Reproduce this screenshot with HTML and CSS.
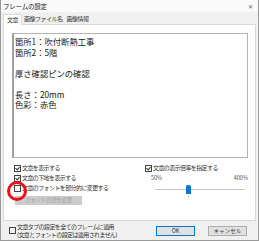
FILE: index.html
```html
<!DOCTYPE html>
<html lang="ja">
<head>
    <meta charset="UTF-8">
    <title>フレームの設定</title>
    <link rel="stylesheet" href="styles.css">
</head>
<body>
    <div class="window">
        <div class="titlebar">
            <span class="title">フレームの設定</span>
            <span class="close">✕</span>
        </div>
        <div class="content">
            <div class="tabs">
                <div class="tab active">文章</div>
                <div class="tab">画像ファイル名</div>
                <div class="tab">画像情報</div>
            </div>
            <div class="panel">
                <div class="textbox">
                    <p>箇所1：吹付断熱工事</p>
                    <p>箇所2：5階</p>
                    <p>&nbsp;</p>
                    <p>厚さ確認ピンの確認</p>
                    <p>&nbsp;</p>
                    <p>長さ：20mm</p>
                    <p>色彩：赤色</p>
                </div>
                <div class="options">
                    <div class="col-left">
                        <label class="check"><span class="box checked"></span>文章を表示する</label>
                        <label class="check"><span class="box checked"></span>文章の下地を表示する</label>
                        <label class="check"><span class="box"></span>文章のフォントを部分的に変更する</label>
                        <button class="btn-disabled" disabled>フォントの部分変更</button>
                    </div>
                    <div class="col-right">
                        <label class="check"><span class="box checked"></span>文章の表示倍率を指定する</label>
                        <div class="scale"><span>50%</span><span>400%</span></div>
                        <div class="slider">
                            <div class="track"></div>
                            <div class="thumb"></div>
                        </div>
                    </div>
                </div>
                <span class="marker"></span>
            </div>
            <div class="footer">
                <label class="apply-all">
                    <span class="box"></span>
                    <span class="apply-text">文章タブの設定を全てのフレームに適用<br>(文章とフォントの設定は適用されません)</span>
                </label>
                <div class="buttons">
                    <button class="btn btn-ok">OK</button>
                    <button class="btn">キャンセル</button>
                </div>
            </div>
        </div>
    </div>
</body>
</html>
```

FILE: styles.css
```css
html, body {
    margin: 0;
    padding: 0;
    width: 259px;
    height: 241px;
    overflow: hidden;
    background-color: #f0f0f0;
}
.window {
    width: 259px;
    height: 241px;
    box-sizing: border-box;
    border: 1px solid #9a9a9a;
    border-top: none;
    background-color: #f0f0f0;
    font-family: "Noto Sans CJK JP", sans-serif;
    font-size: 6px;
    color: #333;
    display: flex;
    flex-direction: column;
}
.titlebar {
    height: 12px;
    flex-shrink: 0;
    display: flex;
    align-items: center;
    justify-content: space-between;
    padding: 0 5px 0 2px;
    background-color: #fafafa;
}
.title {
    font-size: 6.5px;
    letter-spacing: -0.2px;
    line-height: 12px;
    color: #222;
}
.close {
    font-size: 6px;
    color: #666;
}
.content {
    flex: 1;
    padding: 1px 2px 0 2px;
    display: flex;
    flex-direction: column;
}
.tabs {
    display: flex;
    height: 11px;
    flex-shrink: 0;
}
.tab {
    padding: 0 2px;
    line-height: 11px;
    letter-spacing: -0.5px;
    color: #333;
}
.tab.active {
    background-color: #fff;
    border: 1px solid #d9d9d9;
    border-bottom: none;
    padding: 0 3px;
    line-height: 10px;
    position: relative;
    top: 1px;
    z-index: 1;
}
.panel {
    position: relative;
    height: 197px;
    flex-shrink: 0;
    box-sizing: border-box;
    background-color: #fff;
    border: 1px solid #d9d9d9;
    padding: 8px 7px 15px 8px;
    display: flex;
    flex-direction: column;
}
.textbox {
    flex: 1;
    box-sizing: border-box;
    border: 1px solid #b4b4b4;
    border-left: 2px solid #a0a0a0;
    padding: 2px 1px;
    font-size: 8.3px;
    line-height: 10.5px;
    color: #222;
}
.textbox p {
    margin: 0;
}
.options {
    display: flex;
    margin-top: 5px;
}
.col-left {
    width: 131px;
    padding-left: 2px;
    display: flex;
    flex-direction: column;
}
.col-right {
    flex: 1;
    display: flex;
    flex-direction: column;
}
.check {
    display: flex;
    align-items: center;
    height: 10px;
    line-height: 10px;
    white-space: nowrap;
    letter-spacing: -0.6px;
}
.box {
    width: 5px;
    height: 5px;
    border: 1px solid #444;
    margin-right: 1px;
    position: relative;
    flex-shrink: 0;
}
.box.checked::after {
    content: "";
    position: absolute;
    left: 1px;
    top: 0;
    width: 2px;
    height: 3px;
    border: solid #333;
    border-width: 0 1px 1px 0;
    transform: rotate(40deg);
}
.btn-disabled {
    margin: 3px 0 0 1px;
    width: 67px;
    height: 9px;
    padding: 0;
    border: none;
    background-color: #cccccc;
    color: #a0a0a0;
    font-family: inherit;
    font-size: 5.5px;
    letter-spacing: -0.3px;
    line-height: 9px;
}
.scale {
    display: flex;
    justify-content: space-between;
    padding: 0 0 0 6px;
    height: 10px;
    line-height: 10px;
    font-size: 5.5px;
    color: #555;
}
.slider {
    position: relative;
    height: 12px;
    margin: 0 3px 0 10px;
}
.track {
    position: absolute;
    left: 0;
    right: 0;
    top: 6px;
    height: 1px;
    background-color: #c4c4c4;
}
.thumb {
    position: absolute;
    left: 31px;
    top: 2px;
    width: 5px;
    height: 9px;
    background-color: #0078d7;
    border-radius: 2px 2px 0 0;
}
.thumb::after {
    content: "";
    position: absolute;
    left: 2px;
    top: 11px;
    width: 1px;
    height: 1px;
    background-color: #7fb6e6;
}
.marker {
    position: absolute;
    left: 3px;
    top: 156px;
    width: 20px;
    height: 20px;
    box-sizing: border-box;
    border: 3px solid #e8141b;
    border-radius: 50%;
}
.footer {
    flex: 1;
    display: flex;
    align-items: center;
    justify-content: space-between;
    padding: 0 9px 0 6px;
}
.apply-all {
    display: flex;
    align-items: center;
}
.apply-text {
    font-size: 6px;
    letter-spacing: -0.6px;
    line-height: 8px;
}
.buttons {
    display: flex;
    gap: 13px;
}
.btn {
    width: 39px;
    height: 10px;
    padding: 0;
    box-sizing: border-box;
    border: 1px solid #adadad;
    background-color: #e1e1e1;
    font-family: inherit;
    font-size: 5.5px;
    line-height: 8px;
    color: #333;
}
.btn-ok {
    border-color: #0078d7;
}
```
